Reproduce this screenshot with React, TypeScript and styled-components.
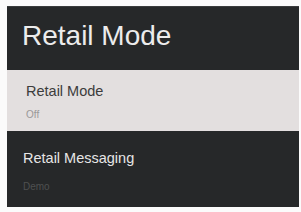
import React from "react";
import styled, {createGlobalStyle} from "styled-components";

const Global = createGlobalStyle`
  html, body {
    margin: 0;
    padding: 0;
    background: #fbfbfb;
    font-family: "Liberation Sans", Arial, sans-serif;
  }
`;

const Screen = styled.div`
  margin: 6px 2px 0 7px;
  height: 201px;
  background: #262829;
  overflow: hidden;
  display: flex;
  flex-direction: column;
`;

const Header = styled.div`
  height: 64px;
  box-sizing: border-box;
  padding: 15px 0 0 15px;
  font-size: 28px;
  line-height: 28px;
  color: #ececec;
  border-top: 1px solid #3a3c3d;
`;

const Row = styled.div<{$selected?: boolean; $top: number; $left: number; $gap: number; $height?: number}>`
  box-sizing: border-box;
  height: ${(p) => (p.$height ? `${p.$height}px` : "auto")};
  flex: ${(p) => (p.$height ? "none" : "1")};
  padding: ${(p) => p.$top}px 0 0 ${(p) => p.$left}px;
  background: ${(p) => (p.$selected ? "#e3dfdf" : "#262829")};
  display: flex;
  flex-direction: column;
  gap: ${(p) => p.$gap}px;
`;

const Title = styled.div<{$selected?: boolean}>`
  font-size: 14.5px;
  line-height: 16px;
  color: ${(p) => (p.$selected ? "#3c3c3c" : "#e6e6e6")};
`;

const Value = styled.div<{$selected?: boolean}>`
  font-size: 10px;
  line-height: 10px;
  color: ${(p) => (p.$selected ? "#9a9898" : "#4e5050")};
`;

export default function App() {
  return (
    <>
      <Global />
      <Screen>
        <Header>Retail Mode</Header>
        <Row $selected $top={13} $left={19} $gap={11} $height={61}>
          <Title $selected>Retail Mode</Title>
          <Value $selected>Off</Value>
        </Row>
        <Row $top={19} $left={16} $gap={16}>
          <Title>Retail Messaging</Title>
          <Value>Demo</Value>
        </Row>
      </Screen>
    </>
  );
}
